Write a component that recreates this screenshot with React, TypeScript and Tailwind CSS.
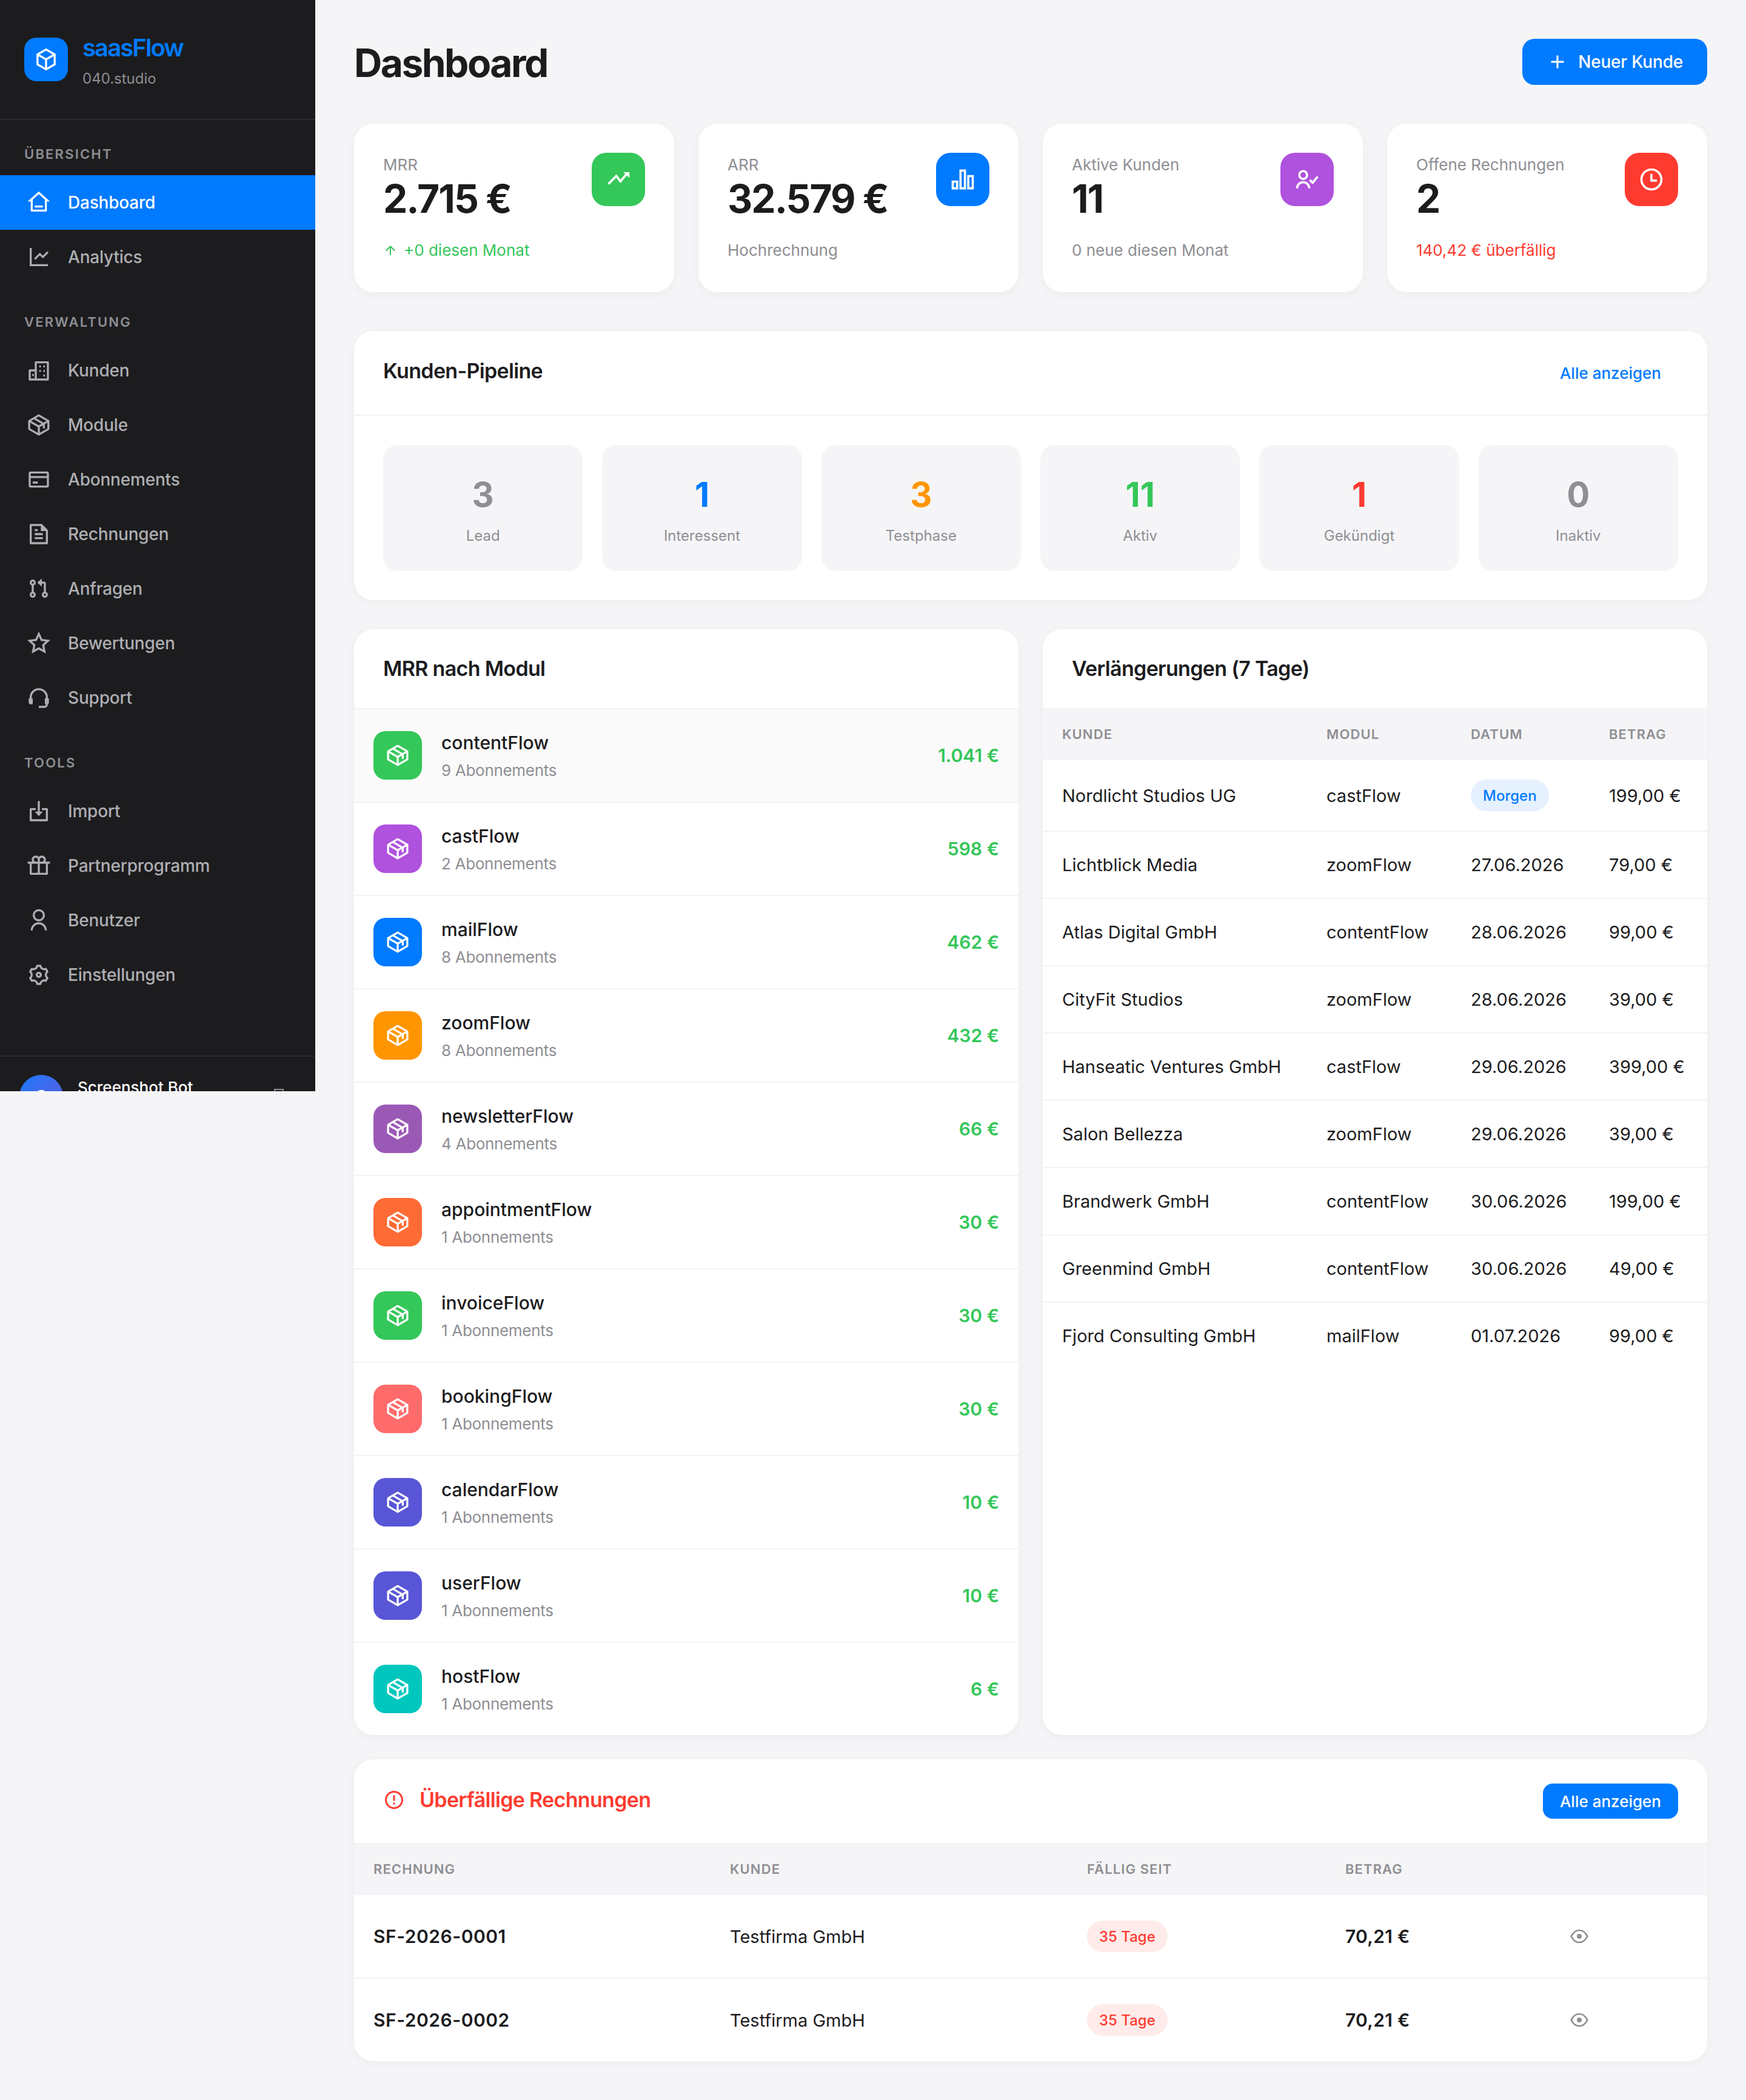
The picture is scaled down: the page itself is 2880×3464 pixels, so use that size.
import React from "react";
import {
  RiHome3Line,
  RiLineChartLine,
  RiBox3Line,
  RiFileTextLine,
  RiGitPullRequestLine,
  RiStarLine,
  RiGiftLine,
  RiUserLine,
  RiSettings3Line,
  RiAddLine,
  RiBarChart2Line,
  RiTimeLine,
  RiArrowUpLine,
  RiErrorWarningLine,
  RiLogoutBoxLine,
} from "react-icons/ri";

type IconProps = { size?: number };

function Svg({ size = 24, children }: { size?: number; children: React.ReactNode }) {
  return (
    <svg width={size} height={size} viewBox="0 0 24 24" fill="none" stroke="currentColor" strokeWidth="2" strokeLinejoin="round">
      {children}
    </svg>
  );
}

function PackageIcon({ size }: IconProps) {
  return (
    <Svg size={size}>
      <path d="M12 2.5 21.5 8v8L12 21.5 2.5 16V8z" />
      <path d="M2.5 8 12 13.5 21.5 8M12 13.5v8" />
      <path d="M7 5.2 17 11v4.5" />
    </Svg>
  );
}

function BuildingIcon({ size }: IconProps) {
  return (
    <Svg size={size}>
      <path d="M3 21v-9h6V4h12v17zM9 12v9" />
      <path d="M12.5 8h1.5M16.5 8H18M12.5 12.5h1.5M16.5 12.5H18M16.5 17H18M5.5 16.5H7" />
    </Svg>
  );
}

function CardIcon({ size }: IconProps) {
  return (
    <Svg size={size}>
      <rect x="3" y="5" width="18" height="14" rx="1" />
      <path d="M3 9.5h18M6 15h5" />
    </Svg>
  );
}

function HeadsetIcon({ size }: IconProps) {
  return (
    <Svg size={size}>
      <path d="M4 13v-1.500a8 8 0 0 1 16 0V13" />
      <path d="M2.500 13h3v5h-1.500a1.500 1.500 0 0 1-1.500-1.500zM21.500 13h-3v5h1.500a1.500 1.500 0 0 0 1.500-1.500z" fill="currentColor" strokeWidth="1" />
      <path d="M20 18v.5a2.500 2.500 0 0 1-2.500 2.500H12" />
    </Svg>
  );
}

function ImportIcon({ size }: IconProps) {
  return (
    <Svg size={size}>
      <path d="M9 10H4v11h16V10h-5" />
      <path d="M12 2v11" />
      <path d="M8 12.500h8l-4 4.500z" fill="currentColor" stroke="none" />
    </Svg>
  );
}

function TrendIcon({ size }: IconProps) {
  return (
    <Svg size={size}>
      <path d="M3 16l7.200-7.200 3.600 5L19.500 7" strokeLinejoin="miter" />
      <path d="M16.500 5.500H22v5.200z" fill="currentColor" stroke="none" />
    </Svg>
  );
}

function UserCheckIcon({ size }: IconProps) {
  return (
    <Svg size={size}>
      <circle cx="8.500" cy="8" r="3.500" />
      <path d="M3 20a5.500 5.500 0 0 1 11 0" />
      <path d="M14.500 12.500l2.500 2.500 4.500-5.500" />
    </Svg>
  );
}

function EyeIcon({ size }: IconProps) {
  return (
    <Svg size={size}>
      <path d="M2 12c2.300-4.800 5.700-7.500 10-7.500s7.700 2.700 10 7.500c-2.300 4.800-5.700 7.500-10 7.500S4.300 16.800 2 12z" />
      <circle cx="12" cy="12" r="3" fill="currentColor" stroke="none" />
    </Svg>
  );
}

type NavItem = { name: string; icon: React.ComponentType<IconProps>; active?: boolean };

const navSections: { label: string; items: NavItem[] }[] = [
  { label: "Übersicht", items: [{ name: "Dashboard", icon: RiHome3Line, active: true }, { name: "Analytics", icon: RiLineChartLine }] },
  {
    label: "Verwaltung",
    items: [
      { name: "Kunden", icon: BuildingIcon },
      { name: "Module", icon: PackageIcon },
      { name: "Abonnements", icon: CardIcon },
      { name: "Rechnungen", icon: RiFileTextLine },
      { name: "Anfragen", icon: RiGitPullRequestLine },
      { name: "Bewertungen", icon: RiStarLine },
      { name: "Support", icon: HeadsetIcon },
    ],
  },
  {
    label: "Tools",
    items: [
      { name: "Import", icon: ImportIcon },
      { name: "Partnerprogramm", icon: RiGiftLine },
      { name: "Benutzer", icon: RiUserLine },
      { name: "Einstellungen", icon: RiSettings3Line },
    ],
  },
];

const stats = [
  { label: "MRR", value: "2.715 €", sub: "+0 diesen Monat", subClass: "text-[#34c759]", up: true, icon: TrendIcon, bg: "bg-[#34c759]" },
  { label: "ARR", value: "32.579 €", sub: "Hochrechnung", subClass: "text-[#8e8e93]", icon: RiBarChart2Line, bg: "bg-[#007aff]" },
  { label: "Aktive Kunden", value: "11", sub: "0 neue diesen Monat", subClass: "text-[#8e8e93]", icon: UserCheckIcon, bg: "bg-[#af52de]" },
  { label: "Offene Rechnungen", value: "2", sub: "140,42 € überfällig", subClass: "text-[#ff3b30]", icon: RiTimeLine, bg: "bg-[#ff3b30]" },
];

const pipeline = [
  { n: "3", label: "Lead", color: "text-[#8e8e93]" },
  { n: "1", label: "Interessent", color: "text-[#007aff]" },
  { n: "3", label: "Testphase", color: "text-[#ff9500]" },
  { n: "11", label: "Aktiv", color: "text-[#34c759]" },
  { n: "1", label: "Gekündigt", color: "text-[#ff3b30]" },
  { n: "0", label: "Inaktiv", color: "text-[#8e8e93]" },
];

const modules = [
  { name: "contentFlow", subs: 9, price: "1.041 €", bg: "bg-[#34c759]" },
  { name: "castFlow", subs: 2, price: "598 €", bg: "bg-[#af52de]" },
  { name: "mailFlow", subs: 8, price: "462 €", bg: "bg-[#007aff]" },
  { name: "zoomFlow", subs: 8, price: "432 €", bg: "bg-[#ff9500]" },
  { name: "newsletterFlow", subs: 4, price: "66 €", bg: "bg-[#9b59b6]" },
  { name: "appointmentFlow", subs: 1, price: "30 €", bg: "bg-[#ff6b35]" },
  { name: "invoiceFlow", subs: 1, price: "30 €", bg: "bg-[#34c759]" },
  { name: "bookingFlow", subs: 1, price: "30 €", bg: "bg-[#ff6b6b]" },
  { name: "calendarFlow", subs: 1, price: "10 €", bg: "bg-[#5856d6]" },
  { name: "userFlow", subs: 1, price: "10 €", bg: "bg-[#5856d6]" },
  { name: "hostFlow", subs: 1, price: "6 €", bg: "bg-[#00c7be]" },
];

const renewals = [
  ["Nordlicht Studios UG", "castFlow", "Morgen", "199,00 €"],
  ["Lichtblick Media", "zoomFlow", "27.06.2026", "79,00 €"],
  ["Atlas Digital GmbH", "contentFlow", "28.06.2026", "99,00 €"],
  ["CityFit Studios", "zoomFlow", "28.06.2026", "39,00 €"],
  ["Hanseatic Ventures GmbH", "castFlow", "29.06.2026", "399,00 €"],
  ["Salon Bellezza", "zoomFlow", "29.06.2026", "39,00 €"],
  ["Brandwerk GmbH", "contentFlow", "30.06.2026", "199,00 €"],
  ["Greenmind GmbH", "contentFlow", "30.06.2026", "49,00 €"],
  ["Fjord Consulting GmbH", "mailFlow", "01.07.2026", "99,00 €"],
];

const thClass = "px-[32px] h-[83px] text-left text-[22px] font-semibold uppercase tracking-[1.1px] text-[#8e8e93] border-b-2 border-[#f2f2f7]";
const h2Class = "text-[34px] leading-[50px] font-semibold tracking-[-0.68px]";

function Sidebar() {
  return (
    <aside className="w-[520px] h-[1800px] shrink-0 overflow-hidden bg-[#1c1c1e] flex flex-col">
      <div className="h-[198px] shrink-0 border-b-2 border-[#2c2c2e] pl-[40px] pt-[55px] flex gap-[24px]">
        <div className="w-[72px] h-[72px] mt-[7px] rounded-[20px] bg-[#007aff] flex items-center justify-center text-white">
          <RiBox3Line size={40} />
        </div>
        <div>
          <div className="text-[40px] leading-[48px] font-semibold tracking-[-1.9px] text-[#007aff]">saasFlow</div>
          <div className="text-[24px] leading-[36px] mt-[9px] text-[#8e8e93]">040.studio</div>
        </div>
      </div>
      <nav className="h-[1543px] shrink-0 pt-[40px]">
        {navSections.map((section) => (
          <div key={section.label} className="mb-[46px]">
            <div className="px-[40px] mb-[18px] text-[22px] leading-[33px] font-semibold uppercase tracking-[2.2px] text-[#8e8e93]">{section.label}</div>
            {section.items.map((item) => {
              const Icon = item.icon;
              return (
                <div
                  key={item.name}
                  className={
                    item.active
                      ? "h-[90px] pl-[40px] flex items-center gap-[24px] bg-[#007aff] text-white text-[28px] font-medium tracking-[-0.2px]"
                      : "h-[90px] pl-[40px] flex items-center gap-[24px] text-[#aeaeb2] text-[28px] font-medium tracking-[-0.2px]"
                  }
                >
                  <span className="w-[48px] flex justify-center">
                    <Icon size={40} />
                  </span>
                  {item.name}
                </div>
              );
            })}
          </div>
        ))}
      </nav>
      <div className="shrink-0 border-t-2 border-[#2c2c2e] px-[32px] pt-[30px] flex gap-[24px]">
        <div className="w-[72px] h-[72px] rounded-full bg-gradient-to-br from-[#007aff] to-[#5856d6] flex items-center justify-center text-white text-[30px] font-semibold">S</div>
        <div className="flex-1 text-[26px] leading-[42px] font-medium text-white">Screenshot Bot</div>
        <span className="mt-[21px] mr-[16px] text-[#8e8e93]">
          <RiLogoutBoxLine size={24} />
        </span>
      </div>
    </aside>
  );
}

function StatCard({ stat }: { stat: (typeof stats)[number] }) {
  const Icon = stat.icon;
  return (
    <div className="h-[278px] rounded-[32px] bg-white shadow-[0_4px_16px_rgba(0,0,0,0.04)] p-[48px] flex justify-between">
      <div>
        <div className="text-[26px] leading-[39px] text-[#8e8e93]">{stat.label}</div>
        <div className="text-[64px] leading-[70px] font-bold tracking-[-2px] text-[#1c1c1e] mt-[2px]">{stat.value}</div>
        <div className={`mt-[30px] text-[26px] leading-[39px] flex items-center gap-[10px] ${stat.subClass}`}>
          {stat.up && <RiArrowUpLine size={24} />}
          {stat.sub}
        </div>
      </div>
      <div className={`w-[88px] h-[88px] rounded-[24px] flex items-center justify-center text-white ${stat.bg}`}>
        <Icon size={44} />
      </div>
    </div>
  );
}

function Card({ className, children }: { className?: string; children: React.ReactNode }) {
  return <div className={`rounded-[32px] bg-white shadow-[0_4px_16px_rgba(0,0,0,0.04)] overflow-hidden ${className ?? ""}`}>{children}</div>;
}

function Dashboard() {
  return (
    <main className="flex-1 min-h-[3464px] p-[64px] bg-[#f5f5f7]">
      <div className="flex items-center justify-between mb-[64px]">
        <h1 className="mt-[4px] text-[64px] leading-[72px] font-bold tracking-[-2.5px] text-[#1c1c1e]">Dashboard</h1>
        <button className="h-[76px] px-[40px] rounded-[20px] bg-[#007aff] text-white text-[28px] font-medium tracking-[-0.2px] flex items-center gap-[16px]">
          <RiAddLine size={36} />
          Neuer Kunde
        </button>
      </div>

      <div className="grid grid-cols-4 gap-[40px] mb-[64px]">
        {stats.map((s) => (
          <StatCard key={s.label} stat={s} />
        ))}
      </div>

      <Card className="mb-[48px]">
        <div className="flex items-center justify-between px-[48px] py-[40px] border-b-2 border-[#f2f2f7]">
          <h2 className={`${h2Class} mb-[6px] text-[#1c1c1e]`}>Kunden-Pipeline</h2>
          <button className="h-[58px] px-[28px] text-[26px] font-medium text-[#007aff]">Alle anzeigen</button>
        </div>
        <div className="grid grid-cols-6 gap-[32px] p-[48px]">
          {pipeline.map((p) => (
            <div key={p.label} className="h-[208px] rounded-[24px] bg-[#f5f5f7] flex flex-col items-center pt-[48px]">
              <div className={`text-[56px] leading-[68px] font-bold ${p.color}`}>{p.n}</div>
              <div className="mt-[16px] text-[24px] leading-[36px] text-[#8e8e93]">{p.label}</div>
            </div>
          ))}
        </div>
      </Card>

      <div className="grid grid-cols-2 gap-[40px] mb-[40px]">
        <Card>
          <div className="px-[48px] py-[40px] border-b-2 border-[#f2f2f7]">
            <h2 className={`${h2Class} text-[#1c1c1e]`}>MRR nach Modul</h2>
          </div>
          {modules.map((m, i) => (
            <div
              key={m.name}
              className={`flex items-center justify-between px-[32px] py-[31px] ${i < modules.length - 1 ? "border-b-2 border-[#f2f2f7]" : ""} ${i === 0 ? "bg-[#fafafa]" : ""}`}
            >
              <div className="flex items-center gap-[32px]">
                <div className={`w-[80px] h-[80px] rounded-[20px] flex items-center justify-center text-white ${m.bg}`}>
                  <PackageIcon size={40} />
                </div>
                <div>
                  <div className="text-[30px] leading-[48px] font-medium text-[#1c1c1e]">{m.name}</div>
                  <div className="mt-[2px] text-[26px] leading-[40px] tracking-[-0.3px] text-[#8e8e93]">{m.subs} Abonnements</div>
                </div>
              </div>
              <div className="text-[30px] font-semibold text-[#34c759]">{m.price}</div>
            </div>
          ))}
        </Card>

        <Card>
          <div className="px-[48px] py-[40px] border-b-2 border-[#f2f2f7]">
            <h2 className={`${h2Class} text-[#1c1c1e]`}>Verlängerungen (7 Tage)</h2>
          </div>
          <table className="w-full table-fixed border-collapse">
            <colgroup>
              <col className="w-[436px]" />
              <col className="w-[238px]" />
              <col className="w-[228px]" />
              <col className="w-[194px]" />
            </colgroup>
            <thead className="bg-[#f5f5f7]">
              <tr>
                <th className={thClass}>Kunde</th>
                <th className={thClass}>Modul</th>
                <th className={thClass}>Datum</th>
                <th className={thClass}>Betrag</th>
              </tr>
            </thead>
            <tbody>
              {renewals.map((r, i) => (
                <tr key={r[0]} className={`text-[29px] leading-[45px] text-[#1c1c1e] ${i < renewals.length - 1 ? "border-b-2 border-[#f2f2f7]" : ""}`}>
                  <td className="px-[32px] py-[32px] whitespace-nowrap">{r[0]}</td>
                  <td className="px-[32px] py-[32px] whitespace-nowrap">{r[1]}</td>
                  <td className="px-[32px] py-[32px] whitespace-nowrap">
                    {r[2] === "Morgen" ? (
                      <span className="inline-flex h-[52px] items-center px-[20px] rounded-full bg-[#e5f1ff] text-[24px] font-medium text-[#007aff]">Morgen</span>
                    ) : (
                      r[2]
                    )}
                  </td>
                  <td className="pl-[32px] py-[32px] whitespace-nowrap">{r[3]}</td>
                </tr>
              ))}
            </tbody>
          </table>
        </Card>
      </div>

      <Card>
        <div className="flex items-center justify-between px-[48px] py-[40px] border-b-2 border-[#f2f2f7]">
          <h2 className={`${h2Class} mb-[4px] flex items-center gap-[24px] text-[#ff3b30]`}>
            <RiErrorWarningLine size={36} />
            Überfällige Rechnungen
          </h2>
          <button className="h-[58px] px-[28px] rounded-[16px] bg-[#007aff] text-[26px] font-medium text-white">Alle anzeigen</button>
        </div>
        <table className="w-full table-fixed border-collapse">
          <colgroup>
            <col className="w-[588px]" />
            <col className="w-[589px]" />
            <col className="w-[426px]" />
            <col className="w-[350px]" />
            <col className="w-[279px]" />
          </colgroup>
          <thead className="bg-[#f5f5f7]">
            <tr>
              <th className={thClass}>Rechnung</th>
              <th className={thClass}>Kunde</th>
              <th className={thClass}>Fällig seit</th>
              <th className={thClass}>Betrag</th>
              <th className={thClass}></th>
            </tr>
          </thead>
          <tbody>
            {["SF-2026-0001", "SF-2026-0002"].map((id, i) => (
              <tr key={id} className={`text-[29px] leading-[45px] text-[#1c1c1e] ${i === 0 ? "border-b-2 border-[#f2f2f7]" : ""}`}>
                <td className="px-[32px] py-[32px] text-[30px] font-semibold tracking-[0.5px]">{id}</td>
                <td className="px-[32px] py-[32px]">Testfirma GmbH</td>
                <td className="px-[32px] py-[32px]">
                  <span className="inline-flex h-[52px] items-center px-[20px] rounded-full bg-[#ffebea] text-[24px] font-medium text-[#ff3b30]">35 Tage</span>
                </td>
                <td className="px-[32px] py-[32px] text-[30px] font-semibold tracking-[0.3px]">70,21 €</td>
                <td className="px-[32px] py-[32px]">
                  <button className="w-[72px] h-[72px] flex items-center justify-center text-[#8e8e93]">
                    <EyeIcon size={32} />
                  </button>
                </td>
              </tr>
            ))}
          </tbody>
        </table>
      </Card>
    </main>
  );
}

export default function App() {
  return (
    <div className="flex items-start w-[2880px] min-h-[3464px] bg-[#f5f5f7] font-[family-name:Inter,sans-serif] antialiased">
      <Sidebar />
      <Dashboard />
    </div>
  );
}
